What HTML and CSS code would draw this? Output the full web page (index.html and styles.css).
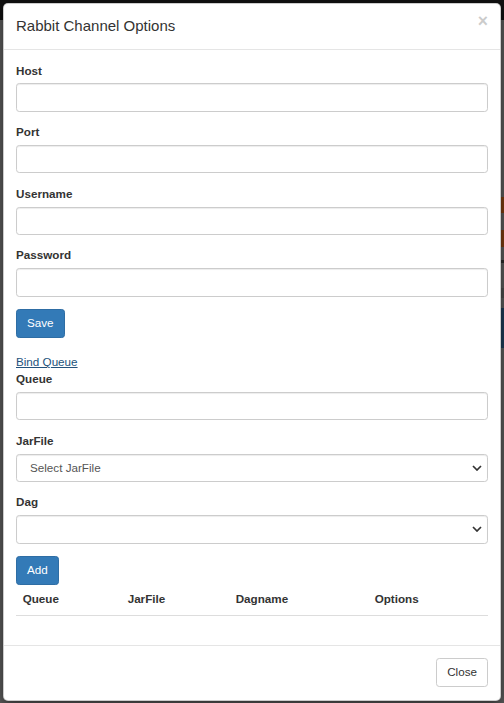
FILE: index.html
```html
<!DOCTYPE html>
<html>
<head>
<meta charset="utf-8">
<link rel="stylesheet" href="styles.css">
</head>
<body>
<div class="modal">
  <div class="modal-header">
    <h4 class="modal-title">Rabbit Channel Options</h4>
    <button class="close" type="button">×</button>
  </div>
  <div class="modal-body">
    <div class="form-group">
      <label>Host</label>
      <input class="form-control" type="text">
    </div>
    <div class="form-group">
      <label>Port</label>
      <input class="form-control" type="text">
    </div>
    <div class="form-group">
      <label>Username</label>
      <input class="form-control" type="text">
    </div>
    <div class="form-group">
      <label>Password</label>
      <input class="form-control" type="password">
    </div>
    <div class="actions">
      <button class="btn btn-primary" type="button">Save</button>
    </div>
    <div class="bind"><a href="#">Bind Queue</a></div>
    <div class="form-group">
      <label>Queue</label>
      <input class="form-control" type="text">
    </div>
    <div class="form-group">
      <label>JarFile</label>
      <div class="select-wrap">
        <select class="form-control select"><option>Select JarFile</option></select>
        <svg class="chevron" width="10" height="6" viewBox="0 0 10 6"><path d="M1 1 L5 5 L9 1" fill="none" stroke="#333" stroke-width="1.7"/></svg>
      </div>
    </div>
    <div class="form-group">
      <label>Dag</label>
      <div class="select-wrap">
        <select class="form-control select"><option></option></select>
        <svg class="chevron" width="10" height="6" viewBox="0 0 10 6"><path d="M1 1 L5 5 L9 1" fill="none" stroke="#333" stroke-width="1.7"/></svg>
      </div>
    </div>
    <div class="actions">
      <button class="btn btn-primary" type="button">Add</button>
    </div>
    <table class="table">
      <thead>
        <tr>
          <th class="col-queue">Queue</th>
          <th class="col-jar">JarFile</th>
          <th class="col-dag">Dagname</th>
          <th class="col-opt">Options</th>
        </tr>
      </thead>
      <tbody></tbody>
    </table>
  </div>
  <div class="modal-footer">
    <button class="btn btn-default" type="button">Close</button>
  </div>
</div>
</body>
</html>
```
FILE: styles.css
```css
html {
  background: #5a5a5a;
}
body {
  margin: 0;
  min-height: 703px;
  font-family: "Liberation Sans", Arial, sans-serif;
  font-size: 11.67px;
  line-height: 16.67px;
  color: #333;
  background:
    linear-gradient(#111, #111) 0 0 / 100% 20px no-repeat,
    linear-gradient(#7b3b10, #7b3b10) right 0 top 197px / 4px 16px no-repeat,
    linear-gradient(#7b3b10, #7b3b10) right 0 top 230px / 4px 17px no-repeat,
    linear-gradient(#2a2a2a, #2a2a2a) right 0 top 260px / 4px 3px no-repeat,
    linear-gradient(#4c4c4c, #4c4c4c) right 0 top 288px / 4px 10px no-repeat,
    linear-gradient(#1d3a56, #1d3a56) right 0 top 308px / 4px 40px no-repeat,
    #5a5a5a;
}
.modal {
  margin: 3px 0 0 3px;
  width: 498px;
  box-sizing: border-box;
  background: #fff;
  border: 1px solid rgba(0, 0, 0, 0.2);
  border-radius: 5px;
  box-shadow: 0 4px 12px rgba(0, 0, 0, 0.5);
}
.modal-header {
  display: flex;
  justify-content: space-between;
  align-items: flex-start;
  padding: 12px 12px 13px;
  border-bottom: 1px solid #e5e5e5;
}
.modal-title {
  margin: 0;
  font-size: 15px;
  line-height: 20px;
  font-weight: normal;
  color: #333;
}
.close {
  padding: 0;
  margin: -3px 0 0 0;
  border: 0;
  background: transparent;
  font-family: "Liberation Sans", Arial, sans-serif;
  font-size: 17.5px;
  line-height: 17.5px;
  font-weight: bold;
  color: #000;
  opacity: 0.2;
}
.modal-body {
  padding: 12.5px 12px;
}
.form-group {
  margin-bottom: 12.5px;
}
label {
  display: block;
  font-weight: bold;
  margin-bottom: 4.17px;
}
.form-control {
  display: block;
  width: 100%;
  box-sizing: border-box;
  height: 28.33px;
  padding: 5px 10px;
  border: 1px solid #ccc;
  border-radius: 3.3px;
  box-shadow: inset 0 1px 1px rgba(0, 0, 0, 0.075);
  font: inherit;
  color: #555;
  background: #fff;
  margin: 0;
}
.select-wrap {
  position: relative;
}
.select {
  appearance: none;
  -webkit-appearance: none;
  padding-left: 13px;
}
.chevron {
  position: absolute;
  right: 6px;
  top: 11px;
  pointer-events: none;
}
.actions {
  display: flex;
}
.btn {
  display: inline-block;
  margin: 0;
  padding: 5px 10px;
  font-family: inherit;
  font-size: 11.67px;
  line-height: 16.67px;
  font-weight: normal;
  border: 1px solid transparent;
  border-radius: 3.3px;
}
.btn-primary {
  color: #fff;
  background: #337ab7;
  border-color: #2e6da4;
}
.btn-default {
  color: #333;
  background: #fff;
  border-color: #ccc;
}
.bind {
  margin-top: 16.6px;
}
.bind a {
  color: #23527c;
  text-decoration: underline;
}
.table {
  width: 100%;
  border-collapse: collapse;
  table-layout: fixed;
  margin-bottom: 16.67px;
}
.table th {
  box-sizing: border-box;
  text-align: left;
  padding: 6.67px;
  font-weight: bold;
  border-bottom: 1.67px solid #ddd;
}
.col-queue { width: 105px; }
.col-jar { width: 108px; }
.col-dag { width: 139px; }
.col-opt { width: auto; }
.modal-footer {
  display: flex;
  justify-content: flex-end;
  padding: 12.5px 12px;
  border-top: 1px solid #e5e5e5;
}
```
